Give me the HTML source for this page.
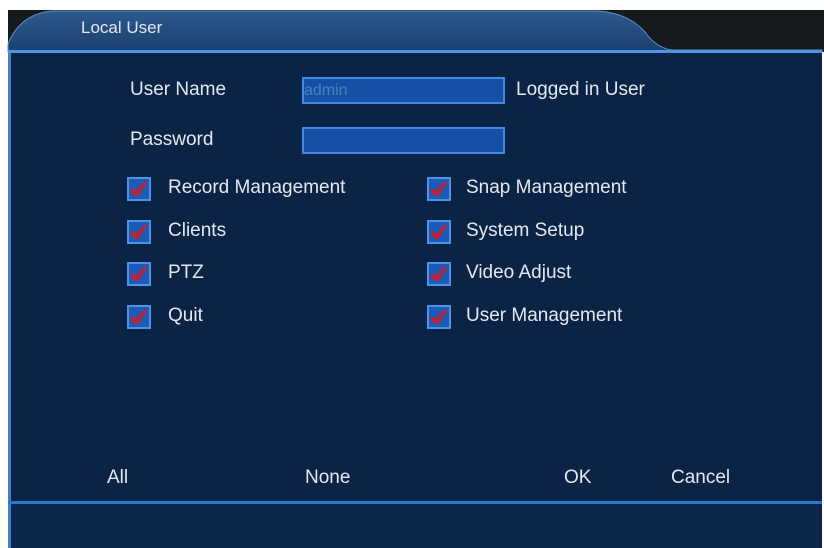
<!DOCTYPE html>
<html><head><style>
body{margin:0;width:824px;height:548px;background:#fff;position:relative;overflow:hidden;font-family:"Liberation Sans",sans-serif;}
.t{position:absolute;color:#e4e8ee;font-size:19px;line-height:20px;white-space:nowrap;}
.inp{position:absolute;left:302px;width:199px;height:23px;background:#1650a6;border:2px solid #3f8ae0;}
.cb{position:absolute;width:20px;height:20px;background:#1c5ab8;border:2px solid #4a94e8;}
.cb::after{content:"";position:absolute;left:2px;top:2px;width:16px;height:16px;background:#c8202c;clip-path:polygon(0 45%,35% 60%,85% 0,100% 10%,40% 100%,0 70%);}
</style></head><body>
<div style="position:absolute;left:8px;top:10px;width:816px;height:42px;background:#161a1f"></div>
<svg style="position:absolute;left:0;top:0" width="824" height="60">
<defs><linearGradient id="g" x1="0" y1="0" x2="0" y2="1"><stop offset="0" stop-color="#2d5a8e"/><stop offset="1" stop-color="#1a3f6e"/></linearGradient></defs>
<path d="M8 52 L8 44 Q20 14 52 11 L598 11 Q628 13 645 32 Q656 48 672 50 L822 50 L822 52 Z" fill="url(#g)" stroke="#5f8fc4" stroke-width="1"/>
</svg>
<div style="position:absolute;left:8px;top:50px;width:814px;height:3px;background:#4f95e6"></div>
<div style="position:absolute;left:8px;top:53px;width:814px;height:495px;background:#0b2446;border-left:3px solid #3f7fd0;box-sizing:border-box"></div>
<div style="position:absolute;left:8px;top:501px;width:814px;height:3px;background:#2f76c8"></div>
<div style="position:absolute;left:8px;top:504px;width:814px;height:44px;background:#0d274b;border-left:3px solid #3f7fd0;box-sizing:border-box"></div>
<div class="t" style="left:81px;top:18px;font-size:17px">Local User</div>
<div class="t" style="left:130px;top:80px">User Name</div>
<div class="inp" style="top:77px"></div>
<div class="t" style="left:304px;top:81px;color:#4f7fb8;font-size:16px">admin</div>
<div class="t" style="left:516px;top:80px">Logged in User</div>
<div class="t" style="left:130px;top:130px">Password</div>
<div class="inp" style="top:127px"></div>
<div class="cb" style="left:127px;top:177px"></div><div class="t" style="left:168px;top:178px">Record Management</div>
<div class="cb" style="left:127px;top:220px"></div><div class="t" style="left:168px;top:221px">Clients</div>
<div class="cb" style="left:127px;top:262px"></div><div class="t" style="left:168px;top:263px">PTZ</div>
<div class="cb" style="left:127px;top:305px"></div><div class="t" style="left:168px;top:306px">Quit</div>
<div class="cb" style="left:427px;top:177px"></div><div class="t" style="left:466px;top:178px">Snap Management</div>
<div class="cb" style="left:427px;top:220px"></div><div class="t" style="left:466px;top:221px">System Setup</div>
<div class="cb" style="left:427px;top:262px"></div><div class="t" style="left:466px;top:263px">Video Adjust</div>
<div class="cb" style="left:427px;top:305px"></div><div class="t" style="left:466px;top:306px">User Management</div>
<div class="t" style="left:107px;top:468px">All</div>
<div class="t" style="left:305px;top:468px">None</div>
<div class="t" style="left:564px;top:468px">OK</div>
<div class="t" style="left:671px;top:468px">Cancel</div>
</body></html>
